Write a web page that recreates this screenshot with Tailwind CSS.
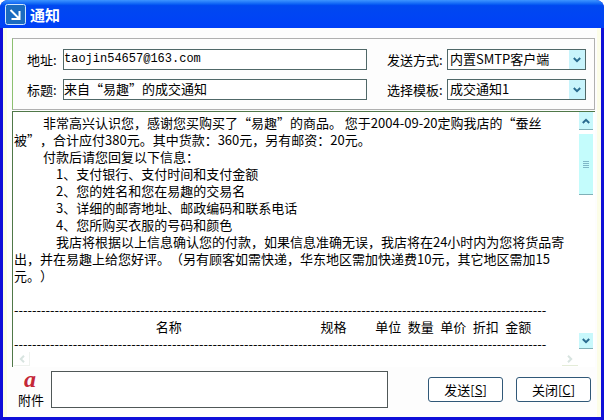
<!DOCTYPE html>
<html lang="zh-CN">

<head>
    <meta charset="UTF-8">
    <meta name="viewport" content="width=device-width, initial-scale=1.0">
    <script src="https://cdn.jsdelivr.net/npm/@tailwindcss/browser@4"></script>
    <title>通知</title>
</head>

<body class="bg-white font-['Noto_Sans_CJK_SC',sans-serif] text-[13px] leading-[17px] text-black [text-spacing-trim:space-all]">
    <main class="min-h-screen flex flex-col bg-[#1010d8] rounded-t-lg overflow-hidden">
        <!-- title bar -->
        <header class="h-7 shrink-0 flex items-center gap-1 pl-[5px] bg-linear-to-b from-[#3d95ff] via-[#0048f0] via-20% to-[#0040f8]">
            <svg class="w-[21px] h-[21px]" viewBox="0 0 21 21" fill="none">
                <rect x="0.5" y="0.5" width="20" height="20" rx="2" fill="#1b6cc0" stroke="#cfe6ff" />
                <path d="M5.5 6 L14 14.5 M14.5 7 V15 H6.5" stroke="#fff" stroke-width="2" />
            </svg>
            <h1 class="text-white text-[15px] font-bold">通知</h1>
        </header>

        <div class="grow flex flex-col mx-[3px] mb-[3px] pl-[5px] pr-0.5 pt-2.5 bg-[#fdfdfd] border-x-4 border-[#fcfde8]">
            <!-- mail settings -->
            <form class="grid grid-cols-[340px_1fr] gap-x-5 gap-y-[9px] pt-2.5 pb-[9px] pl-3.5 pr-2 border border-[#b0b0b0] border-l-[#8cc070]">
                <div class="flex items-center">
                    <label for="address" class="w-9 shrink-0 whitespace-nowrap">地址:</label>
                    <input id="address" type="text" value="taojin54657@163.com" class="grow min-w-0 h-[21px] pb-0.5 border border-[#506868] bg-white font-['Liberation_Mono',monospace] text-xs">
                </div>
                <div class="flex items-center">
                    <label for="method" class="w-[60px] shrink-0 whitespace-nowrap">发送方式:</label>
                    <div class="relative grow">
                        <select id="method" class="appearance-none block w-full h-[21px] pl-0.5 pb-0.5 border border-[#506868] bg-white">
                            <option>内置SMTP客户端</option>
                        </select>
                        <span class="absolute top-px right-px w-4 h-[19px] bg-[#c8f4fc] flex items-center justify-center pointer-events-none">
                            <svg class="w-2 h-1.5" viewBox="0 0 8 6" fill="none" stroke="#2a6c90" stroke-width="2"><path d="M0.8 1 L4 4.2 L7.2 1" /></svg>
                        </span>
                    </div>
                </div>
                <div class="flex items-center">
                    <label for="subject" class="w-9 shrink-0 whitespace-nowrap">标题:</label>
                    <input id="subject" type="text" value="来自“易趣”的成交通知" class="grow min-w-0 h-[21px] pb-0.5 border border-[#506868] bg-white">
                </div>
                <div class="flex items-center">
                    <label for="template" class="w-[60px] shrink-0 whitespace-nowrap">选择模板:</label>
                    <div class="relative grow">
                        <select id="template" class="appearance-none block w-full h-[21px] pl-0.5 pb-0.5 border border-[#506868] bg-white">
                            <option>成交通知1</option>
                        </select>
                        <span class="absolute top-px right-px w-4 h-[19px] bg-[#c8f4fc] flex items-center justify-center pointer-events-none">
                            <svg class="w-2 h-1.5" viewBox="0 0 8 6" fill="none" stroke="#2a6c90" stroke-width="2"><path d="M0.8 1 L4 4.2 L7.2 1" /></svg>
                        </span>
                    </div>
                </div>
            </form>

            <!-- message body -->
            <div class="mt-px grow flex border-t border-l border-[#507848] bg-white">
                <div class="grow min-w-0 flex flex-col">
                    <textarea aria-label="正文" wrap="off" rows="14" class="block w-full resize-none overflow-hidden pt-0.5 pl-px outline-none">
　　 非常高兴认识您，感谢您买购买了“易趣”的商品。 您于2004-09-20定购我店的“蚕丝
被”，合计应付380元。其中货款：360元，另有邮资：20元。
　　 付款后请您回复以下信息：
　　　 1、支付银行、支付时间和支付金额
　　　 2、您的姓名和您在易趣的交易名
　　　 3、详细的邮寄地址、邮政编码和联系电话
　　　 4、您所购买衣服的号码和颜色
　　　 我店将根据以上信息确认您的付款，如果信息准确无误，我店将在24小时内为您将货品寄
出，并在易趣上给您好评。（另有顾客如需快递，华东地区需加快递费10元，其它地区需加15
元。）

----------------------------------------------------------------------------------------------------------------------
　　　　　　　　　　    名称　　　　　　　　　　   规格　　 单位&ensp;数量&ensp;单价&ensp;折扣&ensp;金额
----------------------------------------------------------------------------------------------------------------------</textarea>
                    <div class="h-3.5 flex justify-between px-px text-[#d8e4e0]">
                        <button type="button" aria-label="向左" class="w-4 flex items-center justify-center border-r border-b border-[#eef2ee]">
                            <svg class="w-1.5 h-2" viewBox="0 0 6 8" fill="none" stroke="currentColor" stroke-width="2"><path d="M5 0.8 L1.8 4 L5 7.2" /></svg>
                        </button>
                        <button type="button" aria-label="向右" class="w-4 flex items-center justify-center border-b border-[#e4ecd8]">
                            <svg class="w-1.5 h-2" viewBox="0 0 6 8" fill="none" stroke="currentColor" stroke-width="2"><path d="M1 0.8 L4.2 4 L1 7.2" /></svg>
                        </button>
                    </div>
                </div>
                <div class="w-3.5 mr-0.5 mb-[18px] flex flex-col">
                    <button type="button" aria-label="向上" class="h-[18px] flex items-center justify-center bg-[#c8f8fc] border-b border-[#80b0b8]">
                        <svg class="w-2 h-1.5" viewBox="0 0 8 6" fill="none" stroke="#2a6c90" stroke-width="2"><path d="M0.8 5 L4 1.8 L7.2 5" /></svg>
                    </button>
                    <div class="mt-1 h-[61px] flex flex-col items-center justify-center gap-px bg-[#c4fcfc] border-b border-[#80b0b8]">
                        <span class="w-1.5 h-px bg-[#80b8c8]"></span>
                        <span class="w-1.5 h-px bg-[#80b8c8]"></span>
                        <span class="w-1.5 h-px bg-[#80b8c8]"></span>
                        <span class="w-1.5 h-px bg-[#80b8c8]"></span>
                    </div>
                    <button type="button" aria-label="向下" class="mt-auto h-4 flex items-center justify-center bg-[#c8f8fc] border-b border-[#80b0b8]">
                        <svg class="w-2 h-1.5" viewBox="0 0 8 6" fill="none" stroke="#2a6c90" stroke-width="2"><path d="M0.8 1 L4 4.2 L7.2 1" /></svg>
                    </button>
                </div>
            </div>

            <!-- attachments and actions -->
            <footer class="flex items-center pt-1 pb-[9px] pr-1">
                <label for="attachment" class="w-[39px] shrink-0 pl-1.5 flex flex-col">
                    <span class="w-6 pb-1 text-center font-['Liberation_Serif',serif] italic font-bold text-2xl leading-4 text-[#c42838]">a</span>
                    <span class="whitespace-nowrap">附件</span>
                </label>
                <input id="attachment" type="text" class="grow min-w-0 h-[37px] border border-[#505858] bg-white">
                <button type="button" class="ml-10 w-[75px] h-[25px] shrink-0 border border-[#305878] rounded-[3px] bg-white">发送[<u>S</u>]</button>
                <button type="button" class="ml-[13px] w-[75px] h-[25px] shrink-0 border border-[#305878] rounded-[3px] bg-white">关闭[<u>C</u>]</button>
            </footer>
        </div>
    </main>
</body>

</html>
